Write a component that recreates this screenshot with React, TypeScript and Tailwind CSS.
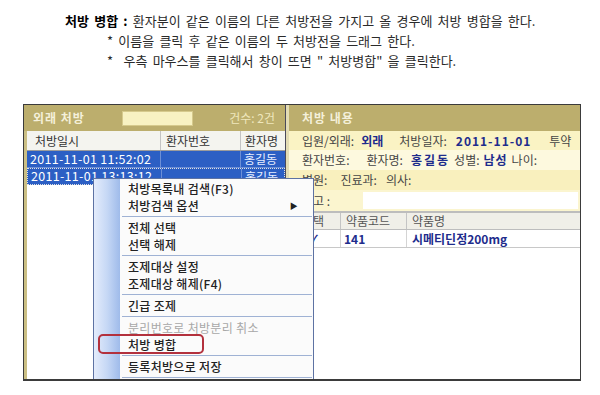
import React from "react";

// Context menu items: null = separator
const MENU: ({ label: string; arrow?: boolean; disabled?: boolean; marked?: boolean } | null)[] = [
  { label: "처방목록내 검색(F3)" },
  { label: "처방검색 옵션", arrow: true },
  null,
  { label: "전체 선택" },
  { label: "선택 해제" },
  null,
  { label: "조제대상 설정" },
  { label: "조제대상 해제(F4)" },
  null,
  { label: "긴급 조제" },
  null,
  { label: "분리번호로 처방분리 취소", disabled: true },
  { label: "처방 병합", marked: true },
  null,
  { label: "등록처방으로 저장" },
  null,
];

function Label({ children, className = "" }: { children: React.ReactNode; className?: string }) {
  return <span className={`text-[#454545] ${className}`}>{children}</span>;
}

function Value({ children, className = "" }: { children: React.ReactNode; className?: string }) {
  return <span className={`font-bold text-[#1e2c8c] ${className}`}>{children}</span>;
}

function ContextMenu() {
  return (
    <div className="absolute left-[69px] top-[73px] w-[221px] h-[220px] flex border border-[#5d72a3] bg-[#fbfbfb]">
      <div className="w-[26px] bg-gradient-to-r from-[#e4ecfb] via-[#c6d8f5] to-[#9fbbea]" />
      <div className="flex-1 pt-[1px] pr-[1px]">
        {MENU.map((m, i) =>
          m === null ? (
            <div key={i} className="h-[5px] flex items-center pl-[2px]">
              <div className="h-px w-full bg-[#9fb2d4]" />
            </div>
          ) : (
            <div
              key={i}
              className={`relative h-[17px] flex items-center pl-[8px] pr-[14px] text-[12px] tracking-[0.3px] ${
                m.disabled ? "text-[#a8a8a8]" : "text-[#222] font-medium"
              }`}
            >
              <span className="flex-1 whitespace-nowrap">{m.label}</span>
              {m.arrow && <span className="text-[8px] text-[#222]">▶</span>}
              {m.marked && (
                <div className="absolute left-[-22px] top-[-2px] w-[106px] h-[20px] rounded-[5px] border-2 border-[#b3313d]" />
              )}
            </div>
          )
        )}
      </div>
    </div>
  );
}

function LeftPanel() {
  return (
    <div className="w-[261px] flex flex-col">
      <div className="h-[26px] bg-[#bcae6d] flex items-center pl-[9px] pr-[10px]">
        <span className="text-[12px] font-bold tracking-[1px] text-[#f4f0da] w-[89px]">외래 처방</span>
        <div className="w-[71px] h-[15px] bg-[#f8f2c2] border border-[#d6ca8c]" />
        <span className="ml-auto text-[12px] text-[#efe7bd]">건수: 2건</span>
      </div>
      <div className="flex-1 flex flex-col border-l-[3px] border-[#cbbf84] bg-white">
        <div className="h-[20px] flex text-[12px] text-[#333] bg-[#f4f4ef] border-b border-[#9c9c9c]">
          <div className="w-[134px] pl-[8px] flex items-center border-r border-[#c4c4c4]">처방일시</div>
          <div className="w-[80px] pl-[5px] flex items-center border-r border-[#c4c4c4]">환자번호</div>
          <div className="flex-1 pl-[4px] flex items-center whitespace-nowrap overflow-hidden">환자명</div>
        </div>
        {["2011-11-01 11:52:02", "2011-11-01 13:13:12"].map((d, i) => (
          <div
            key={d}
            className={`h-[17px] flex text-[12.5px] tracking-[0.3px] text-white bg-[#2c5fc4] ${
              i === 1 ? "border border-dotted border-[#e0e0e0]" : "border-b border-[#6d8fd6]"
            }`}
          >
            <div className="w-[134px] pl-[3px] flex items-center border-r border-[#6d8fd6] whitespace-nowrap">{d}</div>
            <div className="w-[80px] border-r border-[#6d8fd6]" />
            <div className="flex-1 pl-[3px] flex items-center whitespace-nowrap text-[12px] tracking-normal text-[#e8eeff]">홍길동</div>
          </div>
        ))}
      </div>
    </div>
  );
}

function RightPanel() {
  return (
    <div className="flex-1 flex flex-col text-[12px]">
      <div className="h-[26px] bg-[#bcae6d] flex items-center pl-[13px]">
        <span className="font-bold tracking-[1px] text-[#f4f0da]">처방 내용</span>
      </div>
      <div className="h-[19px] bg-[#faf3c4] flex items-center pl-[13px] whitespace-nowrap overflow-hidden">
        <Label>입원/외래:</Label>
        <Value className="ml-[7px]">외래</Value>
        <Label className="ml-[16px]">처방일자:</Label>
        <Value className="ml-[9px] tracking-[1px]">2011-11-01</Value>
        <Label className="ml-[18px]">투약</Label>
      </div>
      <div className="h-[20px] bg-[#fdf9de] flex items-center pl-[13px] whitespace-nowrap overflow-hidden">
        <Label>환자번호:</Label>
        <Label className="ml-[17px]">환자명:</Label>
        <Value className="ml-[8px] tracking-[2px]">홍길동</Value>
        <Label className="ml-[4px]">성별:</Label>
        <Value className="ml-[4px] tracking-[1px]">남성</Value>
        <Label className="ml-[4px]">나이:</Label>
      </div>
      <div className="h-[20px] bg-[#f9f0be] flex items-center pl-[13px] whitespace-nowrap">
        <Label>병원:</Label>
        <Label className="ml-[13px]">진료과:</Label>
        <Label className="ml-[9px]">의사:</Label>
      </div>
      <div className="h-[21px] bg-[#fbf5cf] flex items-center pl-[13px]">
        <Label className="w-[61px]">비고 :</Label>
        <div className="flex-1 h-[17px] bg-white mr-[2px]" />
      </div>
      <div className="h-[19px] flex border-t-2 border-[#555] bg-[#f0efe8] text-[#555] border-b border-[#bdbdbd]">
        <div className="w-[52px] pl-[13px] flex items-center border-r border-[#c4c4c4]">선택</div>
        <div className="w-[66px] pl-[5px] flex items-center border-r border-[#c4c4c4]">약품코드</div>
        <div className="flex-1 pl-[5px] flex items-center">약품명</div>
      </div>
      <div className="h-[18px] flex border-b border-[#c8c8c8] font-bold text-[#1e2c8c]">
        <div className="w-[52px] flex items-center justify-end pr-[22px] border-r border-[#d4d4d4]">✓</div>
        <div className="w-[66px] pl-[3px] flex items-center border-r border-[#d4d4d4]">141</div>
        <div className="flex-1 pl-[5px] flex items-center">시메티딘정200mg</div>
      </div>
      <div className="flex-1 bg-white" />
    </div>
  );
}

export default function App() {
  return (
    <div className="w-[600px] h-[395px] bg-white overflow-hidden font-['Noto_Sans_CJK_KR','Noto_Sans',sans-serif]">
      <div className="pt-[11px] text-[13px] leading-[20px] [word-spacing:2.3px] text-[#2a2a2a]">
        <p className="pl-[65px] whitespace-nowrap">
          <b className="text-black">처방 병합 :</b> 환자분이 같은 이름의 다른 처방전을 가지고 올 경우에 처방 병합을 한다.
        </p>
        <p className="pl-[107px] whitespace-nowrap">* 이름을 클릭 후 같은 이름의 두 처방전을 드래그 한다.</p>
        <p className="pl-[107px] whitespace-pre">{'*  우측 마우스를 클릭해서 창이 뜨면 " 처방병합" 을 클릭한다.'}</p>
      </div>
      <div className="relative mt-[33px] ml-[23px] w-[558px] h-[277px] flex border border-b-2 border-[#3b3b3b] overflow-hidden">
        <LeftPanel />
        <div className="w-[4px] bg-[#e3dcb4] border-l border-[#4a4a5a]" />
        <RightPanel />
        <ContextMenu />
      </div>
    </div>
  );
}
